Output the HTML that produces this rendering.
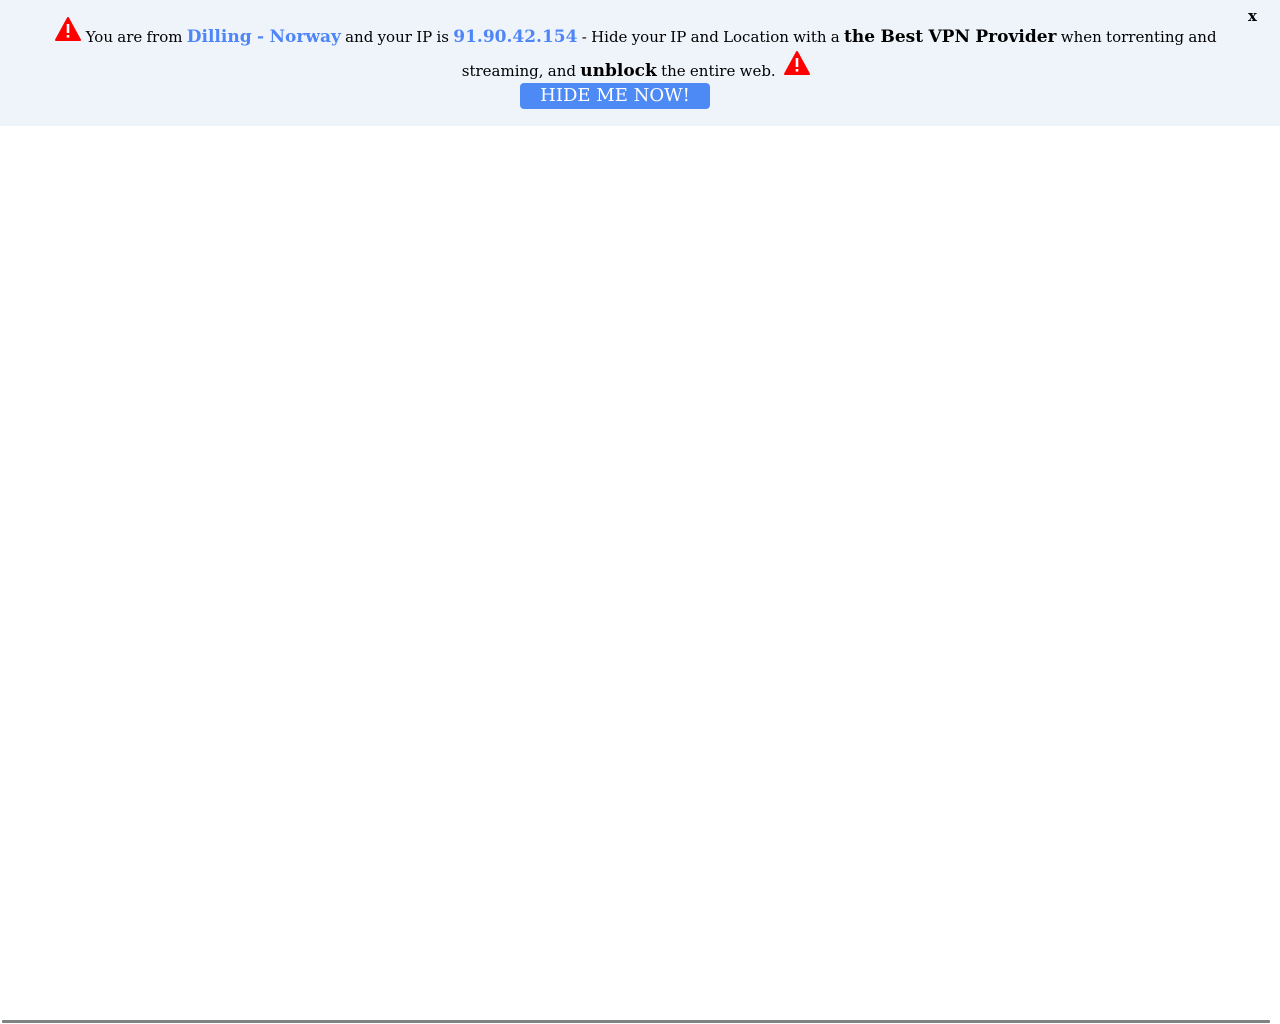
<!DOCTYPE html>
<html><head><meta charset="utf-8"><style>
html,body{margin:0;padding:0;background:#fff;width:1280px;height:1024px;overflow:hidden;position:relative}
#bar{position:absolute;left:0;top:0;width:1280px;height:126px;background:#eff4fb;font-family:"DejaVu Serif",serif;color:#000}
#txt{position:absolute;left:36px;top:20px;width:1200px;text-align:center;font-size:15px;line-height:33px;word-spacing:-0.5px}
.b{color:#4f86f7;font-weight:bold;font-size:17px}
.k{font-weight:bold;font-size:17px}
.tri{display:inline-block;vertical-align:-2px;position:relative;top:-3px}
#btn{position:absolute;left:520px;top:83px;width:190px;height:26px;background:#4d8af6;border-radius:4px;color:#fff;text-align:center;font-size:18px;line-height:25px;font-family:"DejaVu Serif",serif}
#x{position:absolute;left:1248px;top:7px;font-weight:bold;font-size:15px;font-family:"DejaVu Serif",serif}
#line{position:absolute;left:2px;top:1020px;width:1268px;height:3px;background:#7f8480;border-radius:1px}
</style></head><body>
<div id="bar">
<div id="x">x</div>
<div id="txt"><svg class="tri" width="26" height="24" viewBox="0 0 26 24"><path d="M13 1 L25 23 L1 23 Z" fill="#f00" stroke="#f00" stroke-linejoin="round" stroke-width="2"/><rect x="11.7" y="7" width="2.6" height="9" fill="#fff"/><rect x="11.7" y="18" width="2.6" height="2.6" fill="#fff"/></svg> You are from <span class="b">Dilling - Norway</span> and your IP is <span class="b">91.90.42.154</span> - Hide your IP and Location with a <span class="k">the Best VPN Provider</span> when torrenting and streaming, and <span class="k">unblock</span> the entire web. &nbsp;<svg class="tri" width="26" height="24" viewBox="0 0 26 24"><path d="M13 1 L25 23 L1 23 Z" fill="#f00" stroke="#f00" stroke-linejoin="round" stroke-width="2"/><rect x="11.7" y="7" width="2.6" height="9" fill="#fff"/><rect x="11.7" y="18" width="2.6" height="2.6" fill="#fff"/></svg></div>
<div id="btn">HIDE ME NOW!</div>
</div>
<div id="line"></div>
</body></html>
